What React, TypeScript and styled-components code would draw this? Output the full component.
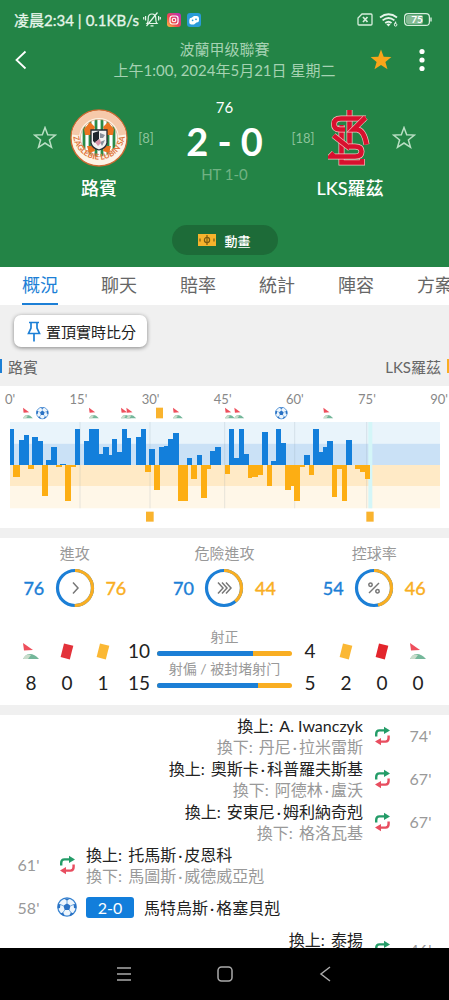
import React from "react";
import styled, { createGlobalStyle } from "styled-components";

const BLUE = "#1c7fd6";
const AMBER = "#f9ae22";
const GREEN = "#238446";

const GlobalStyle = createGlobalStyle`
  * { box-sizing: border-box; }
  body {
    margin: 0;
    background: #fff;
    color: #222;
    font-family: Lato, "Noto Sans CJK TC", sans-serif;
    font-size: 16px;
  }
  button {
    font: inherit;
    color: inherit;
    background: none;
    border: 0;
    padding: 0;
    margin: 0;
    cursor: pointer;
  }
  svg { display: block; flex: none; }
  h1, h2, p, ul { margin: 0; padding: 0; font-weight: 400; }
`;

const Screen = styled.div`
  height: 100vh;
  display: flex;
  flex-direction: column;
  overflow: hidden;
`;

/* ---------- header ---------- */

const Header = styled.header`
  flex: none;
  display: flex;
  flex-direction: column;
  background: ${GREEN};
  color: #fff;
  padding-bottom: 12px;
`;

const StatusBar = styled.div`
  display: flex;
  align-items: center;
  justify-content: space-between;
  height: 39px;
  padding: 0 17px 0 14px;
  font-size: 15px;
  color: #e6f5ea;
  -webkit-text-stroke: 0.3px currentColor;
`;

const StatusGroup = styled.div<{ $gap: number }>`
  display: flex;
  align-items: center;
  gap: ${(p) => p.$gap}px;
`;

const TitleBar = styled.div`
  display: grid;
  grid-template-columns: 68px 1fr 43px 21px;
  align-items: center;
  height: 42px;
  padding-left: 12px;
  padding-right: 16px;
`;

const IconButton = styled.button`
  display: flex;
  align-items: center;
  justify-content: flex-start;
`;

const League = styled.h1`
  text-align: center;
  font-size: 15px;
  line-height: 21px;
  color: #a5d2b2;
  white-space: nowrap;
`;

const Match = styled.section`
  display: grid;
  grid-template-columns: 46px 62px 32px 1fr 32px 62px 46px;
  justify-items: center;
  padding: 14px 22px 0;
  height: 144px;
`;

const SideCell = styled.div`
  display: flex;
  align-items: center;
  height: 86px;
  font-size: 13px;
  color: #8cc39b;
`;

const Team = styled.div`
  display: flex;
  flex-direction: column;
  align-items: center;
  padding-top: 14px;
`;

const TeamName = styled.h2`
  margin-top: 9px;
  font-size: 18px;
  line-height: 24px;
  font-weight: 500;
  white-space: nowrap;
`;

const ScoreBox = styled.div`
  display: flex;
  flex-direction: column;
  align-items: center;
  white-space: nowrap;
`;

const Clock = styled.span`
  font-size: 15px;
  line-height: 24px;
`;

const Score = styled.strong`
  font-size: 38px;
  line-height: 44px;
`;

const HalfTime = styled.span`
  font-size: 15px;
  line-height: 22px;
  color: #71b283;
`;

const AnimationButton = styled.button`
  align-self: center;
  display: flex;
  align-items: center;
  justify-content: center;
  gap: 8px;
  width: 106px;
  height: 30px;
  border-radius: 15px;
  background: #1d6b38;
  font-size: 13px;
  font-weight: 500;
`;

/* ---------- tabs ---------- */

const Tabs = styled.nav`
  flex: none;
  display: flex;
  gap: 43px;
  height: 38px;
  padding-left: 22px;
  overflow: hidden;
  background: #fff;
`;

const Tab = styled.button<{ $active?: boolean }>`
  flex: none;
  font-size: 18px;
  line-height: 36px;
  color: ${(p) => (p.$active ? BLUE : "#666")};
  border-bottom: 2px solid ${(p) => (p.$active ? BLUE : "transparent")};
`;

/* ---------- content ---------- */

const Content = styled.main`
  flex: 1;
  min-height: 0;
  overflow: hidden;
  background: #f0f0f0;
`;

const PinButton = styled.button`
  display: flex;
  align-items: center;
  gap: 5px;
  height: 32px;
  margin: 10px 0 0 14px;
  padding: 0 11px 0 13px;
  border-radius: 7px;
  background: #fff;
  font-size: 15px;
  color: #222;
  box-shadow: 0 1px 4px rgba(0, 0, 0, 0.45);
`;

const Legend = styled.div`
  display: flex;
  justify-content: space-between;
  padding-top: 8px;
  height: 39px;
`;

const LegendItem = styled.span<{ $color: string; $right?: boolean }>`
  display: flex;
  flex-direction: ${(p) => (p.$right ? "row-reverse" : "row")};
  align-items: center;
  gap: 6px;
  height: 22px;
  font-size: 15px;
  color: #666;
  &::before {
    content: "";
    width: 2px;
    height: 14px;
    background: ${(p) => p.$color};
  }
`;

const Panel = styled.section`
  background: #fff;
  margin-bottom: 10px;
`;

const Axis = styled.div`
  display: flex;
  justify-content: space-between;
  padding: 5px 1px 0 5px;
  font-size: 13px;
  line-height: 16px;
  color: #888;
`;

const ChartSvg = styled.svg`
  width: 100%;
  height: auto;
`;

const Rates = styled.div`
  display: grid;
  grid-template-columns: repeat(3, 1fr);
  padding-top: 4px;
`;

const Rate = styled.div`
  display: flex;
  flex-direction: column;
  align-items: center;
  font-size: 15px;
  line-height: 22px;
  color: #999;
`;

const RateRow = styled.div`
  display: flex;
  align-items: center;
  gap: 10px;
  margin-top: 4px;
  height: 40px;
`;

const RateValue = styled.span<{ $color: string }>`
  width: 22px;
  text-align: center;
  font-size: 18px;
  color: ${(p) => p.$color};
  -webkit-text-stroke: 0.4px currentColor;
`;

const Counts = styled.div`
  display: grid;
  grid-template-columns: repeat(4, 36px) 1fr repeat(4, 36px);
  padding: 27px 13px 6px;
`;

const CountColumn = styled.div`
  display: flex;
  flex-direction: column;
  align-items: center;
  font-size: 19px;
  line-height: 32px;
`;

const CountIcon = styled.span`
  display: flex;
  align-items: center;
  height: 32px;
`;

const Shots = styled.div`
  display: flex;
  flex-direction: column;
  gap: 4px;
  margin-top: -7px;
`;

const Shot = styled.div`
  height: 28px;
  font-size: 14px;
  line-height: 18px;
  text-align: center;
  white-space: nowrap;
  color: #999;
`;

const Track = styled.div`
  display: flex;
  height: 5px;
  margin-top: 5px;
  border-radius: 3px;
  overflow: hidden;
  background: ${AMBER};
`;

const Fill = styled.div`
  background: ${BLUE};
`;

/* ---------- events ---------- */

const Events = styled.ul`
  list-style: none;
  background: #fff;
  height: 100%;
`;

const EventRow = styled.li<{ $away?: boolean; $height?: number }>`
  display: flex;
  flex-direction: ${(p) => (p.$away ? "row-reverse" : "row")};
  align-items: center;
  height: ${(p) => p.$height ?? 43}px;
  padding-bottom: 2px;
  text-align: ${(p) => (p.$away ? "right" : "left")};
`;

const Minute = styled.span`
  width: 57px;
  text-align: center;
  color: #999;
`;

const EventIcon = styled.span`
  display: flex;
  justify-content: center;
  width: 20px;
`;

const EventText = styled.div`
  margin: 0 9px;
  line-height: 21px;
  white-space: nowrap;
`;

const Out = styled.p`
  color: #999;
`;

const ActionLabel = styled.span`
  margin-right: 2px;
`;

const Dot = styled.span`
  margin: 0 2px;
`;

const Goal = styled.div`
  display: flex;
  align-items: center;
  gap: 10px;
  margin: 0 9px;
  white-space: nowrap;
`;

const GoalBadge = styled.span`
  width: 48px;
  height: 21px;
  border-radius: 3px;
  background: #127edb;
  color: #fff;
  text-align: center;
  line-height: 21px;
`;

const NavBar = styled.footer`
  flex: none;
  display: flex;
  align-items: center;
  justify-content: center;
  gap: 77px;
  height: 52px;
  background: #000;
`;

/* ---------- icons ---------- */

const starPath =
  "M12 1.6l2.7 7.2 7.7.3-6 4.8 2.1 7.4-6.5-4.3-6.5 4.3 2.1-7.4-6-4.8 7.7-.3z";

const Star = ({ size, filled }: { size: number; filled?: boolean }) => (
  <svg width={size} height={size} viewBox="0 0 24 24">
    <path
      d={starPath}
      fill={filled ? "#f9a51a" : "none"}
      stroke={filled ? "none" : "#b9dfc4"}
      strokeWidth="1.5"
    />
  </svg>
);

const BallShapes = () => (
  <g>
    <circle r="9.2" fill="#eef6fd" stroke="#3b86d2" strokeWidth="1.2" />
    <path d="M0-3.8L3.6-1.2 2.3 3.1H-2.3L-3.6-1.2Z" fill="#2a72c4" />
    <path
      d="M0-3.8V-7M3.6-1.2L7-2.6M2.3 3.1L4.3 6M-2.3 3.1L-4.3 6M-3.6-1.2L-7-2.6"
      stroke="#5f9fdc"
      strokeWidth=".9"
    />
    <path
      d="M-3.4-8.6L0-6.4 3.4-8.6ZM9.2-3.6L6.6-2.6 7 1 9.4 1.4ZM7 6.4L4 5.6 2.2 8.6 3.4 9ZM-7 6.4L-4 5.6-2.2 8.6-3.4 9ZM-9.2-3.6L-6.6-2.6-7 1-9.4 1.4Z"
      fill="#2a72c4"
    />
  </g>
);

const Ball = () => (
  <svg width="20" height="20" viewBox="-10 -10 20 20">
    <BallShapes />
  </svg>
);

const CornerShapes = () => (
  <g>
    <path d="M0 0L10 7 1 7.6Z" fill="#ee4f5c" />
    <path d="M0 16C3 9.5 10 9 16 16Z" fill="#74b79a" />
    <path d="M0 16C2 11.5 5 10.8 8 12L5 16Z" fill="#c9dccb" />
  </g>
);

const Corner = () => (
  <svg width="16" height="17" viewBox="0 0 16 17">
    <CornerShapes />
  </svg>
);

const Card = ({ color }: { color: string }) => (
  <svg width="14" height="17" viewBox="0 0 14 17">
    <path d="M4 .5L13.3 2.8 9.8 16.5.6 14Z" fill={color} />
  </svg>
);

const Swap = () => (
  <svg width="17" height="20" viewBox="0 0 17 20" fill="none" strokeWidth="2.4">
    <path d="M2.200 10.500V8Q2.200 4.400 5.500 4.400H11" stroke="#249c68" />
    <path d="M10 .8L16 4.4 10 8Z" fill="#249c68" />
    <path d="M14.600 9.500V12Q14.600 15.600 11.500 15.600H6" stroke="#e84d5f" />
    <path d="M7 12L1 15.6 7 19.2Z" fill="#e84d5f" />
  </svg>
);

const MuteIcon = () => (
  <svg width="18" height="17" viewBox="0 0 18 17" fill="none" stroke="#e6f5ea" strokeWidth="1.2">
    <path d="M4 12.5H14C12.6 11 12.8 9.5 12.8 7.2 12.8 4.5 11 3 9 3S5.2 4.5 5.2 7.2C5.2 9.5 5.400 11 4 12.500ZM7.500 14.800H10.500M3.500 15L14.500 1.500M2.600 5V9.500M15.600 5V9.500M.7 6V8.500M17.300 6V8.500" />
  </svg>
);

const InstagramIcon = () => (
  <svg width="14" height="14" viewBox="0 0 14 14">
    <defs>
      <linearGradient id="insta" x1="0" y1="1" x2="1" y2="0">
        <stop offset="0" stopColor="#fdc644" />
        <stop offset=".4" stopColor="#f0484e" />
        <stop offset="1" stopColor="#b42fc0" />
      </linearGradient>
    </defs>
    <rect width="14" height="14" rx="3" fill="url(#insta)" />
    <rect x="3" y="3" width="8" height="8" rx="2.2" fill="none" stroke="#fff" strokeWidth="1.2" />
    <circle cx="7" cy="7" r="1.8" fill="none" stroke="#fff" strokeWidth="1.1" />
  </svg>
);

const SocialIcon = () => (
  <svg width="14" height="14" viewBox="0 0 14 14">
    <rect width="14" height="14" rx="3" fill="#2a9bd8" />
    <path d="M7 3H10A2.400 2.400 0 0 1 12 5.500V7A2.500 2.500 0 0 1 9.500 9.500L7 11.500H4.500A2.300 2.300 0 0 1 2.300 9V7A2.300 2.300 0 0 1 4.500 4.800Z" fill="#fff" />
    <circle cx="5.600" cy="7.300" r=".9" fill="#2a9bd8" />
    <circle cx="9" cy="6.300" r=".9" fill="#2a9bd8" />
  </svg>
);

const SimIcon = () => (
  <svg width="16" height="13" viewBox="0 0 16 13" fill="none" stroke="#d7eedd" strokeWidth="1.300">
    <path d="M5 1H14Q15 1 15 2V11Q15 12 14 12H2Q1 12 1 11V5Z" />
    <path d="M6 4L10.500 9M10.500 4L6 9" strokeWidth="1.700" />
  </svg>
);

const WifiIcon = () => (
  <svg width="19" height="14" viewBox="0 0 19 14" fill="none" stroke="#e6f5ea" strokeWidth="1.800">
    <path d="M1 4.500Q9.500-2 18 4.500M3.600 7.400Q9.500 2.600 15.400 7.400M6.200 10Q9.500 7.400 12.500 10" />
    <path d="M7.400 11.200Q9.500 9.800 11.500 11.200L9.500 13.400Z" fill="#e6f5ea" stroke="none" />
    <path d="M17 8.600L15.600 11" strokeWidth="1.100" />
    <circle cx="16.600" cy="11.800" r="1.300" strokeWidth="1" />
  </svg>
);

const BatteryIcon = () => (
  <svg width="28" height="13" viewBox="0 0 28 13">
    <rect x=".6" y=".6" width="24.800" height="11.800" rx="3.500" fill="none" stroke="#d7eedd" strokeWidth="1.200" />
    <rect x="2" y="2" width="17" height="9" rx="2" fill="#84ba94" />
    <path d="M27 4.500V8.500" stroke="#d7eedd" strokeWidth="1.400" />
    <text x="13" y="10" fontSize="10" fontWeight="700" fill="#fff" textAnchor="middle">75</text>
  </svg>
);

const HomeCrest = () => (
  <svg width="58" height="58" viewBox="-29 -29 58 58">
    <defs>
      <clipPath id="inner"><circle r="18.500" /></clipPath>
      <path id="arc" d="M-25.800-2A25.900 25.900 0 0 0 25.800-2" />
    </defs>
    <circle r="28" fill="#fdf3e6" stroke="#cf6a33" strokeWidth="1.300" />
    <path d="M-23.500-3A23.700 23.700 0 0 1 23.500-3" fill="none" stroke="#f6c9aa" strokeWidth="7.500" />
    <circle r="18.500" fill="#fff" />
    <g clipPath="url(#inner)">
      <path d="M-15-20V20M-9-20V20M-3-20V20M3-20V20M9-20V20M15-20V20" stroke="#2a8a48" strokeWidth="2.800" />
      <path d="M-15-9L-9-16-4-11-7-3-14-3ZM15-9L9-16 4-11 7-3 14-3ZM-12 8L-5 8-4 13-10 15ZM12 8L5 8 4 13 10 15Z" fill="#ea7420" />
    </g>
    <path d="M-8-8H8V5Q7 10 0 12-7 10-8 5Z" fill="#f4f2f2" stroke="#262c35" strokeWidth="1.300" />
    <path d="M-6-5L0-7V1L-4 5-6 3Z" fill="#20252d" />
    <path d="M1-5L6-3 4 0 1 0ZM1 4L6 2 3 8Z" fill="#8a8f9b" />
    <path d="M-4 4L1 1 2 5-1 8Z" fill="#d893a8" />
    <circle r="18.500" fill="none" stroke="#d9986c" strokeWidth=".6" />
    <text fontSize="8" fontWeight="700" fill="#e0763c">
      <textPath href="#arc" startOffset="50%" textAnchor="middle">ZAGLEBIE LUBIN SA</textPath>
    </text>
  </svg>
);

// The monogram is layered letter by letter so that the outlines interlace.
const monogram = [
  "M13.500 16V53.500H34V50",
  "M21.500 1V36",
  "M38 9.500H13Q6 9.500 6 15T12 20.500H17",
  "M37.500 8.500L25.500 20.500H29Q36 21 38.500 35.500",
  "M5.500 26.500L22 39.500",
  "M21 37.500H27Q33.500 37.500 33.500 42.500T27 47.500H2.500L6 44",
];

const AwayCrest = () => (
  <svg width="44" height="58" viewBox="0 0 44 58" fill="none">
    {monogram.map((d) => (
      <g key={d}>
        <path d={d} stroke="#f3c3bf" strokeWidth="6" />
        <path d={d} stroke="#d8102e" strokeWidth="4.600" />
      </g>
    ))}
  </svg>
);

const PitchIcon = () => (
  <svg width="18" height="12" viewBox="0 0 18 12" fill="none" stroke="#7a5a12" strokeWidth="1.200">
    <rect width="18" height="12" fill="#f7b32c" stroke="none" />
    <circle cx="9" cy="6" r="2.600" />
    <path d="M9 1V11M2 4.500V7.500M16 4.500V7.500" />
  </svg>
);

const PinIcon = () => (
  <svg width="14" height="21" viewBox="0 0 14 21" fill="none" stroke={BLUE} strokeWidth="1.700">
    <path d="M2 1.500H12M4 1.500V7L1.500 12.500H12.500L10 7V1.500M7 12.500V20.500" />
  </svg>
);

/* ---------- pressure chart ---------- */

// [x, width, height] in thirds of a display unit; positive is home, negative away
const bars: [number, number, number][] = [
  [30, 13, 109], [57, 14, 75], [71, 15, 91], [97, 18, 85], [115, 14, 72],
  [139, 14, 15], [153, 17, 55], [181, 18, 3], [225, 16, 109], [253, 13, 72],
  [266, 31, 109], [297, 12, 32], [309, 17, 55], [326, 10, 30], [336, 16, 79],
  [352, 14, 38], [366, 15, 109], [381, 13, 82], [407, 15, 85], [422, 16, 109],
  [448, 16, 48], [478, 13, 55], [491, 14, 58], [505, 14, 79], [519, 17, 97],
  [561, 15, 22], [590, 17, 29], [631, 15, 41], [646, 16, 55], [687, 16, 109],
  [703, 14, 22], [717, 16, 109], [733, 13, 32], [786, 17, 99], [813, 15, 11],
  [828, 16, 109], [844, 15, 67], [912, 17, 30], [939, 17, 109], [956, 13, 38],
  [969, 13, 55], [982, 17, 71], [1038, 17, 75],
  [40, 20, -37], [83, 18, -11], [126, 18, -94], [168, 18, -7], [195, 18, -107],
  [213, 15, -7], [435, 17, -21], [462, 18, -76], [534, 30, -107], [574, 18, -41],
  [603, 17, -100], [620, 14, -13], [674, 16, -26], [743, 14, -40], [757, 18, -36],
  [775, 14, -31], [800, 16, -64], [856, 18, -74], [874, 9, -62], [883, 17, -107],
  [900, 15, -7], [926, 17, -31], [995, 17, -97], [1012, 14, -13], [1026, 16, -107],
  [1065, 16, -11], [1081, 14, -20], [1095, 16, -43],
];

const cornerMarks = [69, 267, 363, 379, 519, 675, 703, 970];
const ballMarks = [127, 844];

const PressureChart = () => (
  <ChartSvg viewBox="0 3 1347 364" role="img" aria-label="進攻走勢">
    <g>
      {cornerMarks.map((x) => (
        <g key={x} transform={`translate(${x} 5) scale(1.850 2)`}><CornerShapes /></g>
      ))}
      {ballMarks.map((x) => (
        <g key={x} transform={`translate(${x} 21) scale(1.900)`}><BallShapes /></g>
      ))}
      <rect x="468" y="5" width="21" height="32" fill="#f9b32e" />
    </g>
    <rect x="30" y="48" width="1290" height="65" fill="#e9f4fb" />
    <rect x="30" y="113" width="1290" height="64" fill="#cae1f6" />
    <rect x="30" y="177" width="1290" height="63" fill="#ffeac6" />
    <rect x="30" y="240" width="1290" height="67" fill="#fff7e8" />
    {[240, 450, 674, 884, 1100].map((x) => (
      <path key={x} d={`M${x} 48V307`} stroke="#8a98a8" strokeOpacity=".2" strokeWidth="3" />
    ))}
    <path d="M1111 48V307" stroke="#d4f6f8" strokeWidth="12" />
    {bars.map(([x, w, h]) => (
      <rect
        key={`${x}:${h}`}
        x={x}
        y={h > 0 ? 177 - h : 177}
        width={w}
        height={Math.abs(h)}
        fill={h > 0 ? "#137fdb" : "#fdae13"}
        shapeRendering="crispEdges"
      />
    ))}
    <rect x="438" y="317" width="23" height="30" fill="#f9b32e" />
    <rect x="1099" y="317" width="22" height="30" fill="#f9b32e" />
  </ChartSvg>
);

/* ---------- rate rings ---------- */

const Ring = ({ home, away, children }: { home: number; away: number; children: React.ReactNode }) => {
  const length = 2 * Math.PI * 17.5;
  const awayLength = (length * away) / (home + away);
  return (
    <svg width="40" height="40" viewBox="-20 -20 40 40" fill="none">
      <circle r="17.5" stroke={BLUE} strokeWidth="3.200" />
      <circle
        r="17.5"
        stroke={AMBER}
        strokeWidth="3.200"
        strokeDasharray={`${awayLength} ${length}`}
        transform="rotate(-90)"
      />
      <g stroke="#777" strokeWidth="1.500">{children}</g>
    </svg>
  );
};

const RateStat = ({ label, home, away, children }: { label: string; home: number; away: number; children: React.ReactNode }) => (
  <Rate>
    {label}
    <RateRow>
      <RateValue $color={BLUE}>{home}</RateValue>
      <Ring home={home} away={away}>{children}</Ring>
      <RateValue $color={AMBER}>{away}</RateValue>
    </RateRow>
  </Rate>
);

const Count = ({ icon, value }: { icon: React.ReactNode; value: number }) => (
  <CountColumn>
    <CountIcon>{icon}</CountIcon>
    <span>{value}</span>
  </CountColumn>
);

const ShotBar = ({ label, home, away }: { label: string; home: number; away: number }) => (
  <Shot>
    {label}
    <Track>
      <Fill style={{ width: `${(home / (home + away)) * 100}%` }} />
    </Track>
  </Shot>
);

const Name = ({ children }: { children: string }) => (
  <>
    {children.split("·").map((part, i) => (
      <React.Fragment key={i}>
        {i > 0 && <Dot>·</Dot>}
        {part}
      </React.Fragment>
    ))}
  </>
);

const Substitution = ({ minute, on, off, away }: { minute: number; on: string; off: string; away?: boolean }) => (
  <EventRow $away={away}>
    <Minute>{minute}'</Minute>
    <EventIcon><Swap /></EventIcon>
    <EventText>
      <p><ActionLabel>換上:</ActionLabel> <Name>{on}</Name></p>
      <Out><ActionLabel>換下:</ActionLabel> <Name>{off}</Name></Out>
    </EventText>
  </EventRow>
);

const tabs = ["概況", "聊天", "賠率", "統計", "陣容", "方案"];

export default function App() {
  return (
    <Screen>
      <GlobalStyle />
      <Header>
        <StatusBar>
          <StatusGroup $gap={4}>
            <span>凌晨2:34</span>
            <span>|</span>
            <span>0.1KB/s</span>
            <StatusGroup $gap={6}>
              <MuteIcon />
              <InstagramIcon />
              <SocialIcon />
            </StatusGroup>
          </StatusGroup>
          <StatusGroup $gap={6}>
            <SimIcon />
            <WifiIcon />
            <BatteryIcon />
          </StatusGroup>
        </StatusBar>
        <TitleBar>
          <IconButton aria-label="返回">
            <svg width="16" height="20" viewBox="0 0 16 20" fill="none" stroke="#fff" strokeWidth="1.800">
              <path d="M13.500 1.500L4.500 10 13.500 18.500" />
            </svg>
          </IconButton>
          <League>
            波蘭甲级聯賽
            <br />
            上午1:00, 2024年5月21日 星期二
          </League>
          <IconButton aria-label="收藏比賽"><Star size={24} filled /></IconButton>
          <IconButton aria-label="更多">
            <svg width="21" height="24" viewBox="0 0 21 24" fill="#fff">
              <circle cx="10" cy="3.500" r="2.600" />
              <circle cx="10" cy="12" r="2.600" />
              <circle cx="10" cy="20.500" r="2.600" />
            </svg>
          </IconButton>
        </TitleBar>
        <Match>
          <SideCell><IconButton aria-label="收藏路賓"><Star size={24} /></IconButton></SideCell>
          <Team>
            <HomeCrest />
            <TeamName>路賓</TeamName>
          </Team>
          <SideCell>[8]</SideCell>
          <ScoreBox>
            <Clock>76</Clock>
            <Score>2 - 0</Score>
            <HalfTime>HT 1-0</HalfTime>
          </ScoreBox>
          <SideCell>[18]</SideCell>
          <Team>
            <AwayCrest />
            <TeamName>LKS羅茲</TeamName>
          </Team>
          <SideCell><IconButton aria-label="收藏LKS羅茲"><Star size={24} /></IconButton></SideCell>
        </Match>
        <AnimationButton><PitchIcon />動畫</AnimationButton>
      </Header>

      <Tabs>
        {tabs.map((name, i) => (
          <Tab key={name} $active={i === 0}>{name}</Tab>
        ))}
      </Tabs>

      <Content>
        <PinButton><PinIcon />置頂實時比分</PinButton>
        <Legend>
          <LegendItem $color={BLUE}>路賓</LegendItem>
          <LegendItem $color={AMBER} $right>LKS羅茲</LegendItem>
        </Legend>

        <Panel>
          <Axis>
            {[0, 15, 30, 45, 60, 75, 90].map((m) => (
              <span key={m}>{m}'</span>
            ))}
          </Axis>
          <PressureChart />
        </Panel>

        <Panel>
          <Rates>
            <RateStat label="進攻" home={76} away={76}>
              <path d="M-2-5.500L3 0-2 5.500" />
            </RateStat>
            <RateStat label="危險進攻" home={70} away={44}>
              <path d="M-6-5.500L-1 0-6 5.500M-2-5.500L3 0-2 5.500M2-5.500L7 0 2 5.500" />
            </RateStat>
            <RateStat label="控球率" home={54} away={46}>
              <path d="M5-5L-5 5" />
              <circle cx="-3.500" cy="-3.200" r="1.700" />
              <circle cx="3.500" cy="3.200" r="1.700" />
            </RateStat>
          </Rates>
          <Counts>
            <Count icon={<Corner />} value={8} />
            <Count icon={<Card color="#e3323a" />} value={0} />
            <Count icon={<Card color="#fbb834" />} value={1} />
            <CountColumn><span>10</span><span>15</span></CountColumn>
            <Shots>
              <ShotBar label="射正" home={10} away={4} />
              <ShotBar label="射偏 / 被封堵射门" home={15} away={5} />
            </Shots>
            <CountColumn><span>4</span><span>5</span></CountColumn>
            <Count icon={<Card color="#fbb834" />} value={2} />
            <Count icon={<Card color="#e3252c" />} value={0} />
            <Count icon={<Corner />} value={0} />
          </Counts>
        </Panel>

        <Events>
          <Substitution away minute={74} on="A. Iwanczyk" off="丹尼·拉米雷斯" />
          <Substitution away minute={67} on="奧斯卡·科普羅夫斯基" off="阿德林·盧沃" />
          <Substitution away minute={67} on="安東尼·姆利納奇剋" off="格洛瓦基" />
          <Substitution minute={61} on="托馬斯·皮恩科" off="馬圖斯·威德威亞剋" />
          <EventRow $height={42}>
            <Minute>58'</Minute>
            <EventIcon><Ball /></EventIcon>
            <Goal>
              <GoalBadge>2-0</GoalBadge>
              <span><Name>馬特烏斯·格塞貝剋</Name></span>
            </Goal>
          </EventRow>
          <Substitution away minute={46} on="泰揚" off="穆克爾" />
        </Events>
      </Content>

      <NavBar>
        <IconButton aria-label="選單">
          <svg width="24" height="24" viewBox="0 0 24 24" stroke="#aaa" strokeWidth="1.500">
            <path d="M5 6H19M5 12H19M5 18H19" />
          </svg>
        </IconButton>
        <IconButton aria-label="主畫面">
          <svg width="24" height="24" viewBox="0 0 24 24" fill="none" stroke="#aaa" strokeWidth="1.500">
            <rect x="5" y="5" width="14" height="14" rx="3.500" />
          </svg>
        </IconButton>
        <IconButton aria-label="返回上一頁">
          <svg width="24" height="24" viewBox="0 0 24 24" fill="none" stroke="#aaa" strokeWidth="1.500">
            <path d="M16 5L7 12 16 19" />
          </svg>
        </IconButton>
      </NavBar>
    </Screen>
  );
}
